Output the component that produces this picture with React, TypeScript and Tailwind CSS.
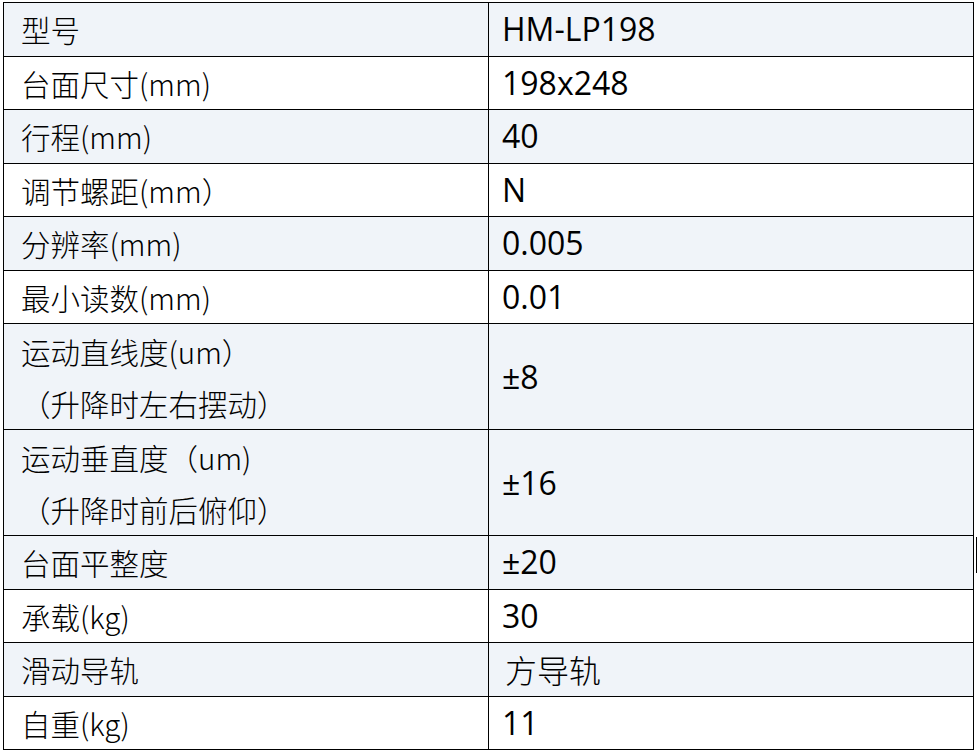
const rows: { label: string[]; value: string; shaded: boolean; cjk?: boolean }[] = [
  { label: ['型号'], value: 'HM-LP198', shaded: true },
  { label: ['台面尺寸(mm)'], value: '198x248', shaded: false },
  { label: ['行程(mm)'], value: '40', shaded: true },
  { label: ['调节螺距(mm）'], value: 'N', shaded: false },
  { label: ['分辨率(mm)'], value: '0.005', shaded: true },
  { label: ['最小读数(mm)'], value: '0.01', shaded: false },
  { label: ['运动直线度(um）', '（升降时左右摆动）'], value: '±8', shaded: true },
  { label: ['运动垂直度（um)', '（升降时前后俯仰）'], value: '±16', shaded: true },
  { label: ['台面平整度'], value: '±20', shaded: true },
  { label: ['承载(kg)'], value: '30', shaded: false },
  { label: ['滑动导轨'], value: '方导轨', shaded: true, cjk: true },
  { label: ['自重(kg)'], value: '11', shaded: false },
];

export default function App() {
  return (
    <div className="relative w-[978px] h-[755px] bg-white pt-[2px] pl-[3px] text-black">
      <table className="w-[971px] border-collapse leading-[52px]">
        <colgroup>
          <col className="w-[485px]" />
          <col />
        </colgroup>
        <tbody>
          {rows.map((r) => (
            <tr
              key={r.label[0]}
              className={r.shaded ? 'bg-[#f0f4f9]' : 'bg-white'}
            >
              <td
                className={`border border-black pl-[17px] align-middle text-[29.5px] font-light font-['Noto_Sans_CJK_SC',sans-serif] ${
                  r.label.length > 1 ? 'h-[106px]' : 'h-[53.5px]'
                }`}
              >
                {r.label.map((l) => (
                  <div key={l} className="whitespace-nowrap">
                    {l}
                  </div>
                ))}
              </td>
              <td
                className={`border border-black align-middle whitespace-nowrap text-[32px] ${
                  r.cjk
                    ? "pl-[16px] font-light font-['Noto_Sans_CJK_SC',sans-serif]"
                    : "pl-[13px] font-['Open_Sans','Noto_Sans_CJK_SC',sans-serif]"
                }`}
              >
                {r.value}
              </td>
            </tr>
          ))}
        </tbody>
      </table>
      <div className="absolute left-[976px] top-[537px] w-[1px] h-[36px] bg-black" />
    </div>
  );
}
